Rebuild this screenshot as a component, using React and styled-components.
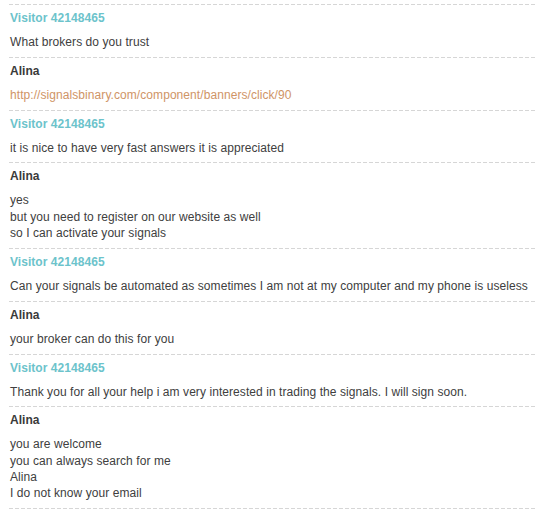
import styled, { createGlobalStyle } from 'styled-components';

const GlobalStyle = createGlobalStyle`
  html, body {
    margin: 0;
    padding: 0;
    background: #fff;
  }

  body {
    font-family: 'Liberation Sans', Arial, sans-serif;
    font-size: 12px;
    color: #404040;
  }
`;

const Transcript = styled.div`
  width: 528px;
  margin: 4px 0 0 9px;
`;

const Dashes = styled.div`
  height: 1px;
  background: repeating-linear-gradient(
    to right,
    #d6d6d6 0,
    #d6d6d6 4px,
    transparent 4px,
    transparent 6px
  );
`;

const Entry = styled.div`
  padding: 5px 0 6.6px 1px;
  display: flex;
  flex-direction: column;
  gap: 7.9px;
`;

const Author = styled.div`
  font-weight: bold;
  line-height: 16px;
  letter-spacing: 0.05px;
  color: ${props => (props.$visitor ? '#6cc3cb' : '#3a3a3a')};
`;

const Message = styled.div`
  line-height: 16.35px;
  letter-spacing: 0.07px;
  white-space: pre-line;
`;

const Link = styled.a`
  color: #cf9466;
  text-decoration: none;
`;

const visitor = 'Visitor 42148465';

const messages = [
  { author: visitor, text: 'What brokers do you trust' },
  { author: 'Alina', link: 'http://signalsbinary.com/component/banners/click/90' },
  { author: visitor, text: 'it is nice to have very fast answers it is appreciated' },
  {
    author: 'Alina',
    text: 'yes\nbut you need to register on our website as well\nso I can activate your signals',
  },
  {
    author: visitor,
    text: 'Can your signals be automated as sometimes I am not at my computer and my phone is useless',
  },
  { author: 'Alina', text: 'your broker can do this for you' },
  {
    author: visitor,
    text: 'Thank you for all your help i am very interested in trading the signals. I will sign soon.',
  },
  {
    author: 'Alina',
    text: 'you are welcome\nyou can always search for me\nAlina\nI do not know your email',
  },
];

export default function App() {
  return (
    <>
      <GlobalStyle />
      <Transcript>
        <Dashes />
        {messages.map((m, i) => (
          <div key={i}>
            <Entry>
              <Author $visitor={m.author !== 'Alina'}>{m.author}</Author>
              <Message>
                {m.link ? <Link href={m.link}>{m.link}</Link> : m.text}
              </Message>
            </Entry>
            <Dashes />
          </div>
        ))}
      </Transcript>
    </>
  );
}
